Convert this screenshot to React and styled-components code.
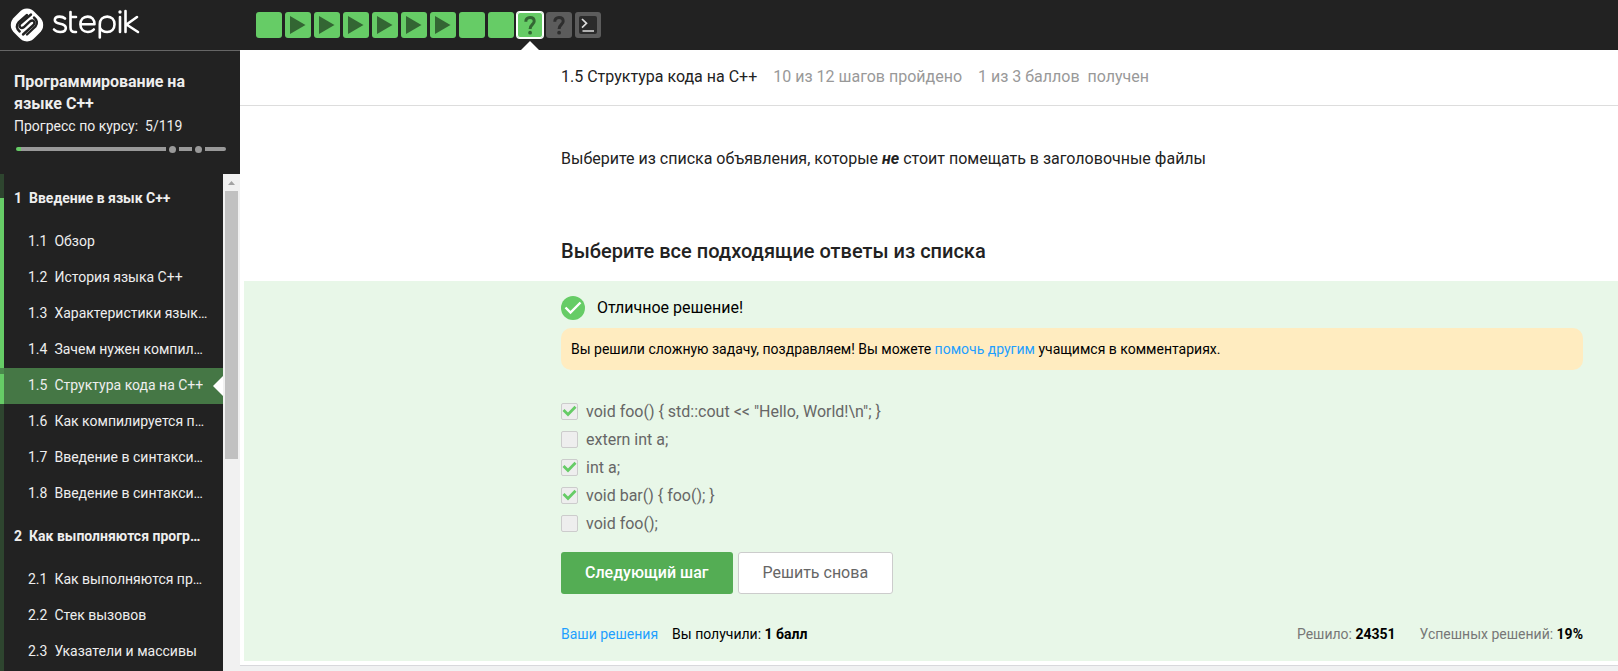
import React from 'react';
import styled, { createGlobalStyle, css } from 'styled-components';

const GlobalStyle = createGlobalStyle`
  *, *::before, *::after { box-sizing: border-box; }
  body {
    margin: 0;
    background: #f0f1f2;
    color: #222;
    font-family: Roboto, "Liberation Sans", sans-serif;
    font-size: 16px;
  }
  h1, h2, p, ol, ul { margin: 0; padding: 0; }
  ol, ul { list-style: none; }
  a { color: inherit; text-decoration: none; }
`;

const Page = styled.div`
  display: flex;
  flex-direction: column;
  height: 100vh;
  overflow: hidden;
`;

const TopBar = styled.header`
  display: flex;
  align-items: center;
  flex: none;
  height: 50px;
  background: #222;
`;

const LogoLink = styled.a`
  flex: none;
  width: 256px;
  height: 50px;
  svg { display: block; }
`;

const Steps = styled.nav`
  display: flex;
  align-items: center;
  gap: 3px;
  height: 50px;
`;

const Step = styled.a`
  position: relative;
  display: block;
  width: 26px;
  height: 26px;
  border-radius: 3px;
  background: ${(p) => (p.$done ? '#66cc66' : '#5c5c5c')};
  svg { display: block; }
  ${(p) => p.$current && css`
    box-shadow: 0 0 0 1px #fff, inset 0 0 0 1px #fff;
    &::after {
      content: '';
      position: absolute;
      left: 4px;
      top: 29px;
      border: 9px solid transparent;
      border-top-width: 0;
      border-bottom-color: #fff;
    }
  `}
`;

const Body = styled.div`
  display: flex;
  flex: 1;
  min-height: 0;
`;

const Sidebar = styled.aside`
  display: flex;
  flex-direction: column;
  flex: none;
  width: 240px;
  border-top: 1px solid #666;
  background: #222;
  color: #eee;
`;

const Course = styled.div`
  flex: none;
  height: 123px;
  padding: 20px 14px 0;
`;

const CourseTitle = styled.h2`
  font-size: 16px;
  line-height: 22px;
  font-weight: 700;
`;

const CourseProgress = styled.p`
  font-size: 14px;
  line-height: 22px;
  white-space: pre;
`;

const ProgressLine = styled.div`
  display: flex;
  align-items: center;
  gap: 3px;
  height: 8px;
  margin: 8px 0 0 2px;
`;

const ProgressPart = styled.span`
  flex: ${(p) => p.$grow} 1 0;
  height: 4px;
  border-radius: ${(p) => p.$round || '0'};
  background: ${(p) => (p.$start ? 'linear-gradient(90deg, #66cc66 5px, #999 5px)' : '#999')};
`;

const ProgressDot = styled.span`
  width: 7px;
  height: 7px;
  border-radius: 50%;
  background: #999;
`;

const Contents = styled.div`
  display: flex;
  flex: 1;
  min-height: 0;
  overflow: hidden;
`;

const Strip = styled.div`
  flex: none;
  width: 4px;
  background: #2e452f;
`;

const StripPart = styled.div`
  height: ${(p) => p.$size}px;
  background: ${(p) => p.$color};
`;

const Lessons = styled.ol`
  flex: 1;
  min-width: 0;
`;

const SectionTitle = styled.a`
  display: block;
  padding: 0 18px 0 10px;
  overflow: hidden;
  font-size: 14px;
  line-height: 48px;
  height: 50px;
  font-weight: 700;
  white-space: pre;
  text-overflow: ellipsis;
`;

const LessonLink = styled.a`
  position: relative;
  display: flex;
  gap: 7px;
  height: 36px;
  padding: 0 14px 0 24px;
  font-size: 14px;
  line-height: 34px;
  span:last-child {
    overflow: hidden;
    white-space: nowrap;
    text-overflow: ellipsis;
  }
  ${(p) => p.$active && css`
    background: #457745;
    &::after {
      content: '';
      position: absolute;
      right: 0;
      top: 8px;
      border: 10px solid transparent;
      border-left-width: 0;
      border-right-color: #fff;
    }
  `}
`;

const Scroll = styled.div`
  flex: none;
  width: 17px;
  padding: 0 2px;
  background: #f1f1f1;
  svg { display: block; }
`;

const Thumb = styled.div`
  height: 54%;
  background: #c1c1c1;
`;

const Main = styled.main`
  flex: 1;
  min-width: 0;
`;

const Sheet = styled.div`
  padding-bottom: 4px;
  border-bottom: 1px solid #d8d8dc;
  background: #fff;
`;

const LessonHeader = styled.header`
  display: flex;
  align-items: center;
  gap: 16px;
  height: 56px;
  padding: 0 35px 2px 321px;
  border-bottom: 1px solid #ddd;
  color: #999;
`;

const LessonName = styled.h1`
  color: #222;
  font-size: 16px;
  font-weight: 400;
`;

const Points = styled.span`
  white-space: pre;
`;

const Task = styled.section`
  padding: 41px 35px 17px 321px;
`;

const TaskText = styled.p`
  line-height: 24px;
  font-weight: 400;
`;

const TaskTitle = styled.h2`
  margin-top: 67px;
  font-size: 20px;
  line-height: 26px;
  font-weight: 500;
`;

const Attempt = styled.form`
  margin-left: 4px;
  padding: 15px 35px 17px 317px;
  background: #e8f7e8;
  color: #000;
`;

const Verdict = styled.p`
  display: flex;
  align-items: center;
  gap: 12px;
  line-height: 24px;
`;

const Hint = styled.p`
  margin-top: 8px;
  padding: 0 10px;
  border-radius: 10px;
  background: #ffecc0;
  font-size: 14px;
  line-height: 42px;
`;

const TextLink = styled.a`
  color: #1e9fff;
`;

const Choices = styled.ul`
  margin-top: 28px;
`;

const Choice = styled.label`
  display: flex;
  align-items: center;
  gap: 8px;
  height: 28px;
  padding-bottom: 1px;
  color: #666;
`;

const Tick = styled.span`
  position: relative;
  display: block;
  width: 17px;
  height: 17px;
  svg {
    position: absolute;
    left: 0;
    top: 0;
  }
`;

const TickBox = styled.input`
  display: block;
  width: 17px;
  height: 17px;
  margin: 0;
  appearance: none;
  border: 1px solid #ccc;
  border-radius: 2px;
  background: #eee;
`;

const Actions = styled.div`
  display: flex;
  gap: 5px;
  margin-top: 14px;
`;

const Button = styled.button`
  height: 42px;
  padding: 0 24px 2px;
  border: ${(p) => (p.$primary ? 'none' : '1px solid #ccc')};
  border-radius: 3px;
  background: ${(p) => (p.$primary ? '#54ad54' : '#fff')};
  color: ${(p) => (p.$primary ? '#fff' : '#666')};
  font-family: inherit;
  font-size: 16px;
  font-weight: ${(p) => (p.$primary ? 500 : 400)};
`;

const Stats = styled.footer`
  display: flex;
  gap: 14px;
  margin-top: 30px;
  font-size: 14px;
  line-height: 20px;
  b { color: #000; font-weight: 700; }
`;

const Totals = styled.div`
  display: flex;
  gap: 24px;
  margin-left: auto;
  color: #777;
`;

const Logo = () => (
  <svg width="150" height="50" viewBox="0 0 150 50" fill="none">
    <path d="M27 8.600C30.500 8.600 32.500 10 35 12.500L39 16.500C41.500 19 43.200 21 43.200 25C43.200 29 41.500 31 39 33.500L35.500 37C33 39.500 31 41.400 27 41.400C23 41.400 21 39.500 18.500 37L15 33.500C12.500 31 10.800 29 10.800 25C10.800 21 12.500 19 15 16.500L19 12.500C21.500 10 23.500 8.600 27 8.600Z" fill="#fff" />
    <g stroke="#222" strokeWidth="2.400" strokeLinecap="round" strokeLinejoin="round">
      <path d="M31 14.500L20.500 23.500C18 26 21 29.500 23.700 27.300L30.300 21.200C33 19 36 22.500 33.500 25L23 34.500" />
      <path d="M34 17.500C37 20 38 23.500 35.500 26.500L27 34.500M27 15L18.500 22.500C15.800 25.500 17 29 19.700 31.500" />
    </g>
    <g stroke="#fff" strokeWidth="2.600" strokeLinecap="round" strokeLinejoin="round">
      <path d="M65 18.500C63.500 17 61.500 16.600 59.500 16.600C56.500 16.600 54.800 18 54.800 20C54.800 25.500 65.800 22 65.800 28C65.800 30.500 63.500 32 60.300 32C57.800 32 55.500 31.200 54 29.500" />
      <path d="M70.500 12V27.500C70.500 30.500 72 32 74.500 32H76M70.500 17H76" />
      <path d="M80.500 24.300H94.500C94.500 19.500 91.700 16.600 87.600 16.600C83.400 16.600 80.400 19.800 80.400 24.300C80.400 29 83.400 32 87.800 32C90.500 32 92.300 31.200 93.800 29.500" />
      <path d="M99.800 37.500V24.300C99.800 19.800 102.800 16.600 107.200 16.600C111.600 16.600 114.500 19.800 114.500 24.300C114.500 28.800 111.600 32 107.200 32C104 32 101.200 30.500 99.800 27.500" />
      <path d="M120 17V32M125.500 11V32M137 17L126.500 24.500L138 32" />
    </g>
    <circle cx="120" cy="12" r="1.700" fill="#fff" />
  </svg>
);

const StepIcon = ({ kind, done }) => {
  const ink = done ? '#336633' : '#2e2e2e';
  return (
    <svg width="26" height="26" viewBox="0 0 26 26" fill="none">
      {kind === 'video' && <path d="M5 4L20.500 13L5 22Z" fill={ink} />}
      {kind === 'quiz' && (
        <>
          <path d="M8.800 9.800C8.800 7 10.400 5.500 13 5.500C15.700 5.500 17.200 7 17.200 9.200C17.200 12.300 13.100 12.600 13.100 17" stroke={ink} strokeWidth="3" />
          <circle cx="13.100" cy="20.700" r="1.900" fill={ink} />
        </>
      )}
      {kind === 'code' && (
        <>
          <rect x="4" y="4" width="18" height="18" rx="2" fill="#2b2b2b" />
          <path d="M7 7L11.500 11.300L7 15.600M7.500 19H19" stroke="#ddd" strokeWidth="1.700" />
        </>
      )}
    </svg>
  );
};

const steps = ['text', 'video', 'video', 'video', 'video', 'video', 'video', 'text', 'text', 'quiz', 'quiz', 'code'];

const sections = [
  {
    title: '1  Введение в язык C++',
    lessons: [
      ['1.1', 'Обзор'],
      ['1.2', 'История языка C++'],
      ['1.3', 'Характеристики языка C++'],
      ['1.4', 'Зачем нужен компилятор'],
      ['1.5', 'Структура кода на C++'],
      ['1.6', 'Как компилируется программа'],
      ['1.7', 'Введение в синтаксис C++'],
      ['1.8', 'Введение в синтаксис C++'],
    ],
  },
  {
    title: '2  Как выполняются программы',
    lessons: [
      ['2.1', 'Как выполняются программы'],
      ['2.2', 'Стек вызовов'],
      ['2.3', 'Указатели и массивы'],
    ],
  },
];

const choices = [
  ['void foo() { std::cout << "Hello, World!\\n"; }', true],
  ['extern int a;', false],
  ['int a;', true],
  ['void bar() { foo(); }', true],
  ['void foo();', false],
];

export default function App() {
  return (
    <Page>
      <GlobalStyle />
      <TopBar>
        <LogoLink href="#" aria-label="Stepik"><Logo /></LogoLink>
        <Steps>
          {steps.map((kind, i) => (
            <Step key={i} href="#" $done={i < 10} $current={i === 9}>
              <StepIcon kind={kind} done={i < 10} />
            </Step>
          ))}
        </Steps>
      </TopBar>
      <Body>
        <Sidebar>
          <Course>
            <CourseTitle>Программирование на языке C++</CourseTitle>
            <CourseProgress>Прогресс по курсу:{'  '}5/119</CourseProgress>
            <ProgressLine>
              <ProgressPart $grow={150} $start $round="2px 0 0 2px" />
              <ProgressDot />
              <ProgressPart $grow={13} />
              <ProgressDot />
              <ProgressPart $grow={21} $round="0 2px 2px 0" />
            </ProgressLine>
          </Course>
          <Contents>
            <Strip>
              <StripPart $size={24} $color="#2e452f" />
              <StripPart $size={170} $color="#66cc66" />
              <StripPart $size={6} $color="#4a8a4c" />
              <StripPart $size={30} $color="#66cc66" />
            </Strip>
            <Lessons>
              {sections.map((section) => (
                <li key={section.title}>
                  <SectionTitle href="#">{section.title}</SectionTitle>
                  <ol>
                    {section.lessons.map(([number, name]) => (
                      <li key={number}>
                        <LessonLink href="#" $active={number === '1.5'}>
                          <span>{number}</span>
                          <span>{name}</span>
                        </LessonLink>
                      </li>
                    ))}
                  </ol>
                </li>
              ))}
            </Lessons>
            <Scroll>
              <svg width="13" height="17" viewBox="0 0 13 17"><path d="M3 11L6.500 7L10 11Z" fill="#a3a3a3" /></svg>
              <Thumb />
            </Scroll>
          </Contents>
        </Sidebar>
        <Main>
          <Sheet>
            <LessonHeader>
              <LessonName>1.5 Структура кода на C++</LessonName>
              <span>10 из 12 шагов пройдено</span>
              <Points>1 из 3 баллов{'  '}получен</Points>
            </LessonHeader>
            <Task>
              <TaskText>
                Выберите из списка объявления, которые <b><i>не</i></b> стоит помещать в заголовочные файлы
              </TaskText>
              <TaskTitle>Выберите все подходящие ответы из списка</TaskTitle>
            </Task>
            <Attempt onSubmit={(e) => e.preventDefault()}>
              <Verdict>
                <svg width="24" height="24" viewBox="0 0 24 24" fill="none">
                  <circle cx="12" cy="12" r="12" fill="#66cc66" />
                  <path d="M4.500 11.500L9.500 16.500L19.500 6.500" stroke="#fff" strokeWidth="2.400" />
                </svg>
                Отличное решение!
              </Verdict>
              <Hint>
                Вы решили сложную задачу, поздравляем! Вы можете <TextLink href="#">помочь другим</TextLink> учащимся в комментариях.
              </Hint>
              <Choices>
                {choices.map(([text, checked]) => (
                  <li key={text}>
                    <Choice>
                      <Tick>
                        <TickBox type="checkbox" defaultChecked={checked} disabled />
                        {checked && (
                          <svg width="17" height="17" viewBox="0 0 17 17" fill="none">
                            <path d="M2.500 7L7 11.500L14.500 3.800" stroke="#66cc66" strokeWidth="2.800" />
                          </svg>
                        )}
                      </Tick>
                      {text}
                    </Choice>
                  </li>
                ))}
              </Choices>
              <Actions>
                <Button type="submit" $primary>Следующий шаг</Button>
                <Button type="button">Решить снова</Button>
              </Actions>
              <Stats>
                <TextLink href="#">Ваши решения</TextLink>
                <span>Вы получили: <b>1 балл</b></span>
                <Totals>
                  <span>Решило: <b>24351</b></span>
                  <span>Успешных решений: <b>19%</b></span>
                </Totals>
              </Stats>
            </Attempt>
          </Sheet>
        </Main>
      </Body>
    </Page>
  );
}
